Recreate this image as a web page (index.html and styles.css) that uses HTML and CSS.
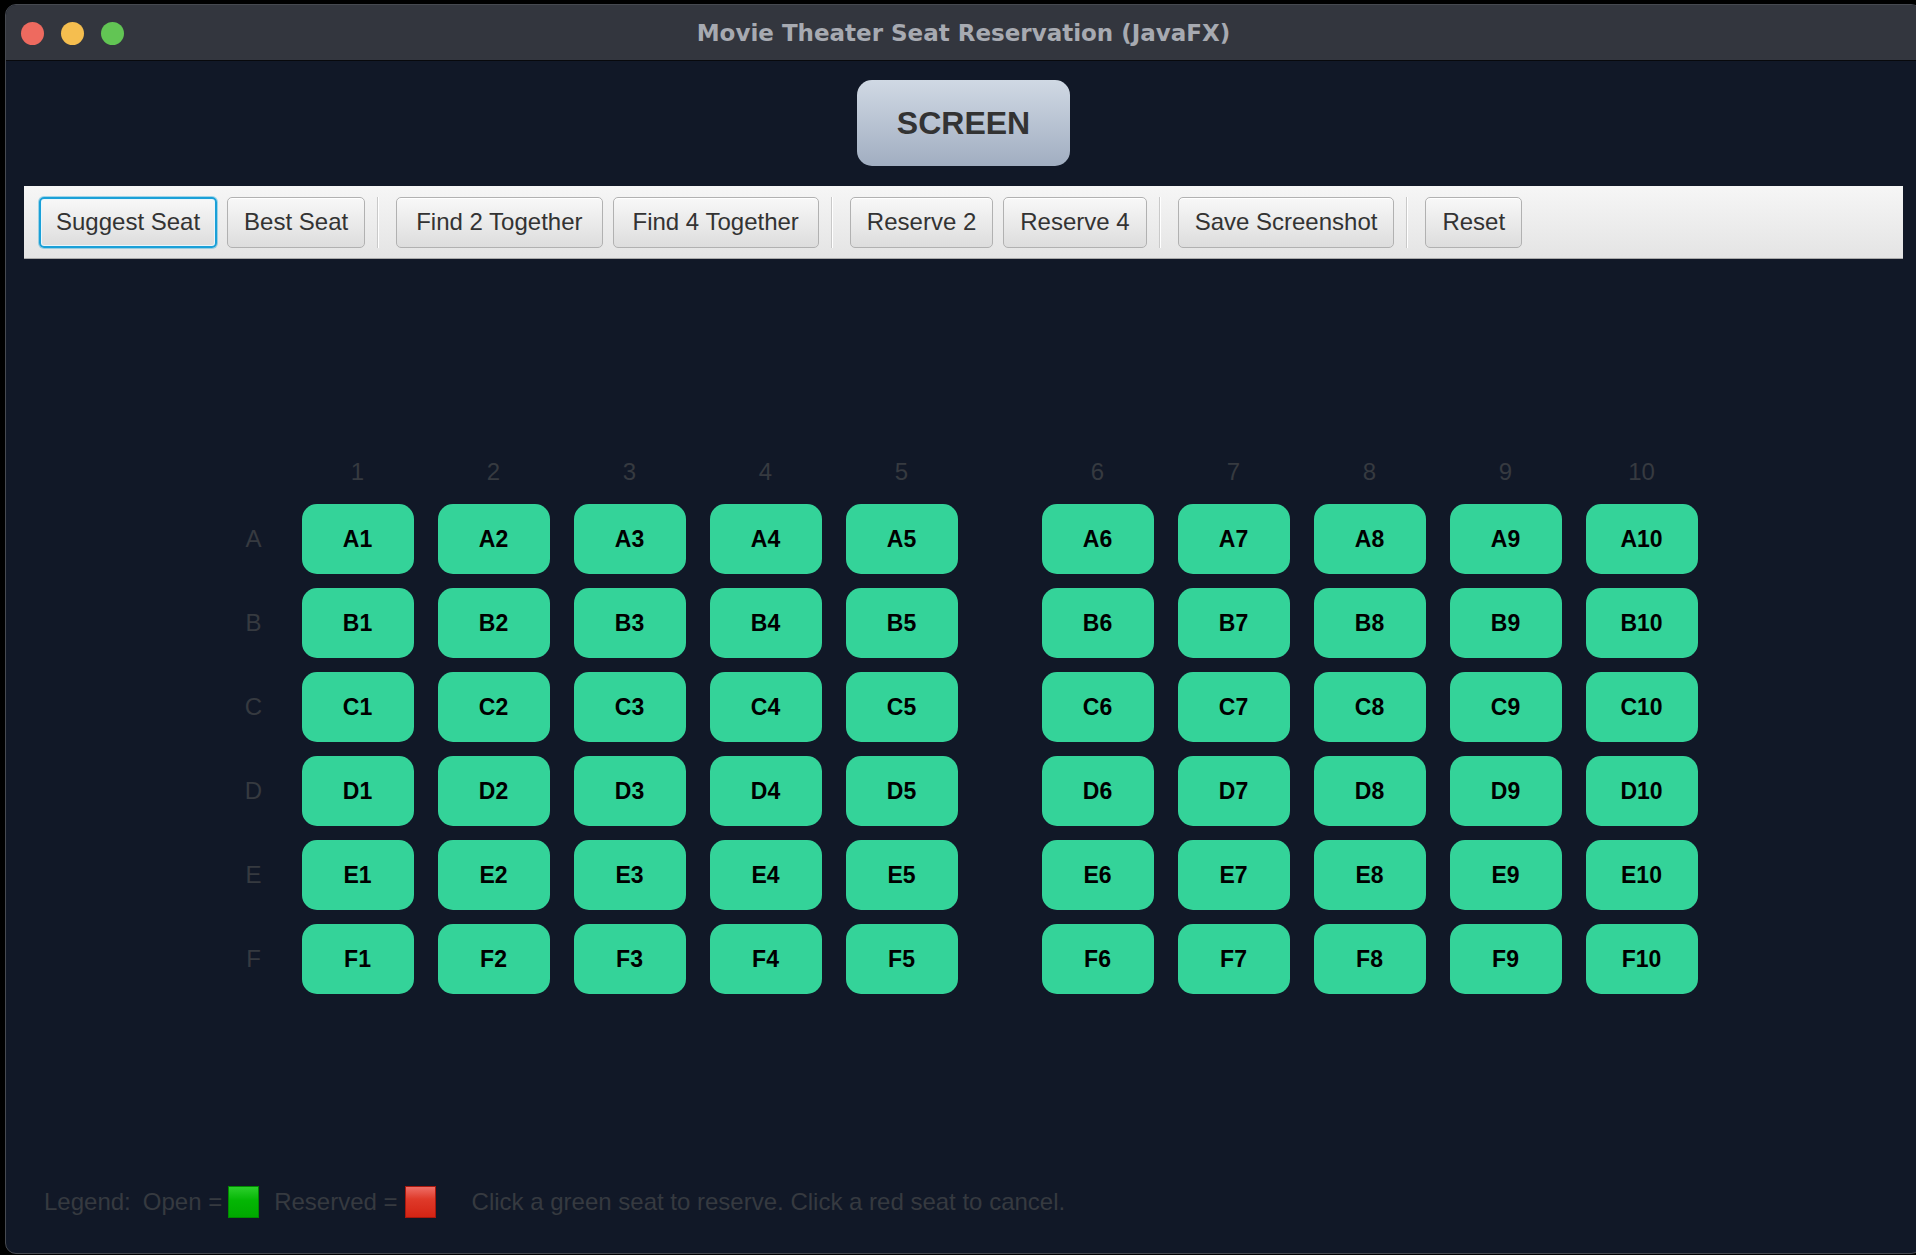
FILE: index.html
```html
<!DOCTYPE html>
<html lang="en">
<head>
<meta charset="utf-8">
<title>Movie Theater Seat Reservation (JavaFX)</title>
<link rel="stylesheet" href="styles.css">
</head>
<body>
<div class="window">
  <div class="titlebar">
    <div class="lights">
      <span class="light red"></span>
      <span class="light yellow"></span>
      <span class="light green"></span>
    </div>
    <div class="title">Movie Theater Seat Reservation (JavaFX)</div>
    <div></div>
  </div>
  <div class="content">
    <div class="screen">SCREEN</div>
    <div class="toolbar">
      <button class="tb-btn focused">Suggest Seat</button>
      <button class="tb-btn">Best Seat</button>
      <span class="tb-sep"></span>
      <button class="tb-btn tb-wide">Find 2 Together</button>
      <button class="tb-btn tb-wide">Find 4 Together</button>
      <span class="tb-sep"></span>
      <button class="tb-btn">Reserve 2</button>
      <button class="tb-btn">Reserve 4</button>
      <span class="tb-sep"></span>
      <button class="tb-btn">Save Screenshot</button>
      <span class="tb-sep"></span>
      <button class="tb-btn">Reset</button>
    </div>
    <div class="seatmap">
      <div class="grid">
        <div></div>
        <div class="col-num">1</div><div class="col-num">2</div><div class="col-num">3</div><div class="col-num">4</div><div class="col-num">5</div>
        <div></div>
        <div class="col-num">6</div><div class="col-num">7</div><div class="col-num">8</div><div class="col-num">9</div><div class="col-num">10</div>

        <div class="row-lbl">A</div>
        <div class="seat">A1</div><div class="seat">A2</div><div class="seat">A3</div><div class="seat">A4</div><div class="seat">A5</div>
        <div></div>
        <div class="seat">A6</div><div class="seat">A7</div><div class="seat">A8</div><div class="seat">A9</div><div class="seat">A10</div>

        <div class="row-lbl">B</div>
        <div class="seat">B1</div><div class="seat">B2</div><div class="seat">B3</div><div class="seat">B4</div><div class="seat">B5</div>
        <div></div>
        <div class="seat">B6</div><div class="seat">B7</div><div class="seat">B8</div><div class="seat">B9</div><div class="seat">B10</div>

        <div class="row-lbl">C</div>
        <div class="seat">C1</div><div class="seat">C2</div><div class="seat">C3</div><div class="seat">C4</div><div class="seat">C5</div>
        <div></div>
        <div class="seat">C6</div><div class="seat">C7</div><div class="seat">C8</div><div class="seat">C9</div><div class="seat">C10</div>

        <div class="row-lbl">D</div>
        <div class="seat">D1</div><div class="seat">D2</div><div class="seat">D3</div><div class="seat">D4</div><div class="seat">D5</div>
        <div></div>
        <div class="seat">D6</div><div class="seat">D7</div><div class="seat">D8</div><div class="seat">D9</div><div class="seat">D10</div>

        <div class="row-lbl">E</div>
        <div class="seat">E1</div><div class="seat">E2</div><div class="seat">E3</div><div class="seat">E4</div><div class="seat">E5</div>
        <div></div>
        <div class="seat">E6</div><div class="seat">E7</div><div class="seat">E8</div><div class="seat">E9</div><div class="seat">E10</div>

        <div class="row-lbl">F</div>
        <div class="seat">F1</div><div class="seat">F2</div><div class="seat">F3</div><div class="seat">F4</div><div class="seat">F5</div>
        <div></div>
        <div class="seat">F6</div><div class="seat">F7</div><div class="seat">F8</div><div class="seat">F9</div><div class="seat">F10</div>
      </div>
    </div>
    <div class="legend">
      <span class="lg-text lg-title">Legend:</span>
      <span class="lg-text lg-open">Open =</span>
      <span class="swatch swatch-open"></span>
      <span class="lg-text lg-res">Reserved =</span>
      <span class="swatch swatch-res"></span>
      <span class="lg-text lg-hint">Click a green seat to reserve. Click a red seat to cancel.</span>
    </div>
  </div>
</div>
</body>
</html>
```

FILE: styles.css
```css
* { box-sizing: border-box; }

html, body {
  margin: 0;
  padding: 0;
}

body {
  width: 1916px;
  height: 1255px;
  overflow: hidden;
  background: #000;
  padding-top: 4px;
  padding-left: 5px;
  font-family: "Liberation Sans", Arial, sans-serif;
}

.window {
  width: 1917px;
  height: 1250px;
  border: 1px solid #464950;
  border-radius: 11px;
  overflow: hidden;
  background: #111827;
}

.titlebar {
  height: 56px;
  background: #33363e;
  border-bottom: 1px solid #08090c;
  display: grid;
  grid-template-columns: 1fr auto 1fr;
  align-items: center;
}

.lights {
  display: flex;
  gap: 17px;
  padding-left: 15px;
  padding-top: 1px;
}

.light {
  width: 23px;
  height: 23px;
  border-radius: 50%;
  display: block;
}
.light.red { background: #ee6a5f; }
.light.yellow { background: #f5be4f; }
.light.green { background: #62c554; }

.title {
  font-family: "DejaVu Sans", "Liberation Sans", sans-serif;
  font-weight: bold;
  font-size: 23px;
  color: #a7aab1;
  padding-top: 1px;
}

.content {
  display: flex;
  flex-direction: column;
}

.screen {
  align-self: center;
  margin-top: 19px;
  width: 213px;
  height: 86px;
  border-radius: 15px;
  background: linear-gradient(#d0d9e4, #a1aec1);
  display: flex;
  align-items: center;
  justify-content: center;
  font-weight: bold;
  font-size: 32px;
  color: #333;
  padding-top: 1px;
}

.toolbar {
  margin: 20px 18px 0 18px;
  height: 73px;
  background: linear-gradient(#f6f6f6, #e4e4e4);
  border-bottom: 1px solid #a9a9a9;
  display: flex;
  align-items: center;
  gap: 10px;
  padding-left: 15px;
}

.tb-btn {
  height: 51px;
  padding: 0 16px;
  border: 1px solid #b1b1b1;
  border-radius: 5px;
  background: linear-gradient(#f8f8f8, #dddddd);
  box-shadow: inset 0 1px 0 #ffffff;
  font-family: "Liberation Sans", Arial, sans-serif;
  font-size: 24px;
  color: #333;
  line-height: 1;
}

.tb-btn.tb-wide {
  padding: 0 19px;
}

.tb-btn.focused {
  border: 2px solid #1aa0d8;
  padding: 0 15px;
  box-shadow: 0 0 0 1px rgba(3, 158, 211, 0.35), inset 0 0 0 1px #eaf6fb;
}

.tb-sep {
  width: 2px;
  height: 51px;
  margin: 0 7px 0 2px;
  border-left: 1px solid #c9c9c9;
  border-right: 1px solid #ffffff;
}

.seatmap {
  margin-top: 195px;
  display: flex;
  justify-content: center;
}

.grid {
  display: grid;
  grid-template-columns: 48px repeat(5, 112px) 36px repeat(5, 112px);
  grid-template-rows: 36px repeat(6, 70px);
  column-gap: 24px;
  row-gap: 14px;
}

.col-num, .row-lbl {
  display: flex;
  align-items: center;
  justify-content: center;
  font-size: 24px;
  color: #363a40;
}

.seat {
  background: #34d399;
  border-radius: 15px;
  display: flex;
  align-items: center;
  justify-content: center;
  font-weight: bold;
  font-size: 23px;
  color: #000;
}

.legend {
  margin-top: 192px;
  height: 32px;
  display: flex;
  align-items: center;
  padding-left: 38px;
}

.lg-text {
  font-size: 24px;
  color: #363a40;
  white-space: nowrap;
}

.lg-open { margin-left: 12px; margin-right: 6px; }
.lg-res { margin-left: 15px; margin-right: 7px; }
.lg-hint { margin-left: 36px; }

.swatch {
  width: 31px;
  height: 32px;
  display: block;
}

.swatch-open {
  background: linear-gradient(#2ccf2c, #04b604 45%, #00a900);
  border: 1px solid #008a00;
}

.swatch-res {
  background: linear-gradient(#ee6e66, #df3a2a 40%, #d42414);
  border: 1px solid #a8180e;
}
```
